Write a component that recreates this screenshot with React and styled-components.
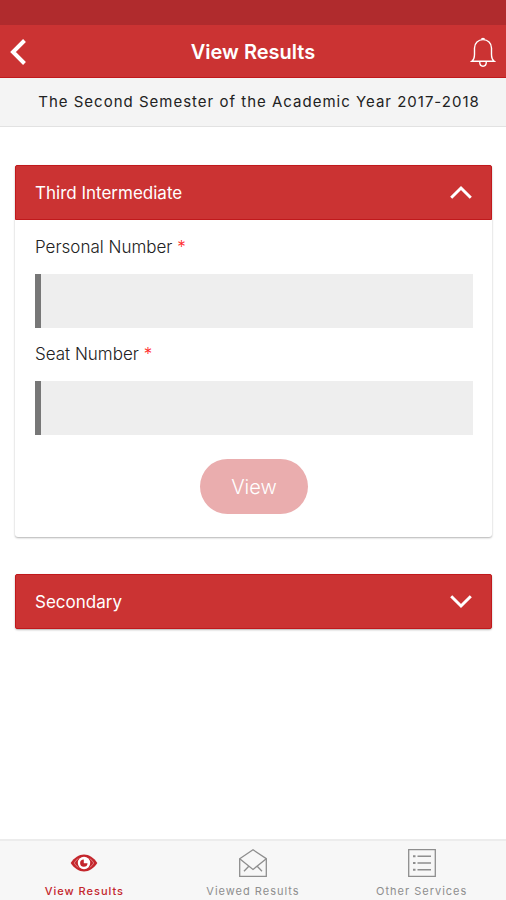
import React, { useState } from 'react';
import styled, { createGlobalStyle, ThemeProvider } from 'styled-components';

const theme = {
  color: {
    primary: '#cb3333',
    primaryDark: '#b02b2d',
    primaryEdge: '#c0191c',
    primaryLight: '#eaadae',
    active: '#c4262c',
    gray100: '#f7f7f7',
    gray200: '#eeeeee',
    gray500: '#8e8e8e',
    gray600: '#777777',
    text: '#222222',
  },
  fontSize: {
    xs: '11px',
    s: '15px',
    m: '17px',
    l: '20px',
  },
};

const GlobalStyle = createGlobalStyle`
  *, *::before, *::after {
    box-sizing: border-box;
  }
  body {
    margin: 0;
    background: #fff;
    font-family: Inter, Roboto, sans-serif;
  }
  button, input {
    font-family: inherit;
  }
`;

const Page = styled.div`
  display: flex;
  flex-direction: column;
  height: 100vh;
`;

const StatusBar = styled.div`
  flex: none;
  height: 25px;
  background: ${({ theme }) => theme.color.primaryDark};
`;

const Header = styled.header`
  display: grid;
  grid-template-columns: 48px 1fr 48px;
  flex: none;
  height: 53px;
  background: ${({ theme }) => theme.color.primary};
  border-bottom: 1px solid ${({ theme }) => theme.color.primaryEdge};
`;

const Title = styled.h1`
  margin: 0;
  color: #fff;
  font-size: ${({ theme }) => theme.fontSize.l};
  font-weight: 600;
  line-height: 54px;
  text-align: center;
`;

const IconButton = styled.button`
  display: flex;
  align-items: center;
  justify-content: ${({ $end }) => ($end ? 'flex-end' : 'flex-start')};
  padding: 0 10px;
  border: 0;
  background: none;
  color: #fff;
  cursor: pointer;
`;

const Semester = styled.p`
  flex: none;
  margin: 0;
  padding-left: 12px;
  background: #f4f4f4;
  border-bottom: 1px solid #e2e2e2;
  color: ${({ theme }) => theme.color.text};
  font-size: ${({ theme }) => theme.fontSize.s};
  letter-spacing: 1px;
  line-height: 48px;
  text-align: center;
  white-space: nowrap;
`;

const Content = styled.main`
  display: flex;
  flex: 1;
  flex-direction: column;
  gap: 37px;
  min-height: 0;
  padding: 38px 14px 38px 15px;
  overflow-y: auto;
`;

const Card = styled.section`
  flex: none;
  border-radius: 3px;
  background: #fff;
  box-shadow: 0 1px 2px rgba(0, 0, 0, 0.3);
`;

const CardHeading = styled.h2`
  margin: 0;
`;

const CardToggle = styled.button`
  display: flex;
  align-items: center;
  justify-content: space-between;
  width: 100%;
  height: 55px;
  padding: 0 19px;
  border: 1px solid ${({ theme }) => theme.color.primaryEdge};
  border-radius: ${({ $open }) => ($open ? '2px 2px 0 0' : '2px')};
  background: ${({ theme }) => theme.color.primary};
  color: #fff;
  font-size: ${({ theme }) => theme.fontSize.m};
  text-align: left;
  cursor: pointer;
`;

const Form = styled.form`
  display: flex;
  flex-direction: column;
  padding: 1px 19px 23px 20px;
`;

const Label = styled.label`
  color: ${({ theme }) => theme.color.text};
  font-size: ${({ theme }) => theme.fontSize.m};
  font-weight: 300;
  line-height: 53px;
`;

const Required = styled.span`
  color: #ff2a2a;
`;

const Input = styled.input`
  width: 100%;
  height: 54px;
  padding: 0 12px;
  border: 0;
  border-left: 6px solid ${({ theme }) => theme.color.gray600};
  border-radius: 0;
  background: ${({ theme }) => theme.color.gray200};
  font-size: ${({ theme }) => theme.fontSize.m};
`;

const SubmitButton = styled.button`
  align-self: center;
  height: 55px;
  margin-top: 24px;
  padding: 0 31px;
  border: 0;
  border-radius: 28px;
  background: ${({ theme }) => theme.color.primaryLight};
  color: #fff;
  font-size: ${({ theme }) => theme.fontSize.l};
  font-weight: 300;
`;

const TabBar = styled.nav`
  display: grid;
  grid-template-columns: repeat(3, 1fr);
  flex: none;
  height: 61px;
  background: ${({ theme }) => theme.color.gray100};
  border-top: 2px solid #ececec;
  overflow: hidden;
`;

const Tab = styled.a`
  display: flex;
  flex-direction: column;
  align-items: center;
  gap: 6px;
  padding-top: 8px;
  color: ${({ theme, $active }) => ($active ? theme.color.active : theme.color.gray500)};
  font-size: ${({ theme }) => theme.fontSize.xs};
  font-weight: ${({ $active }) => ($active ? 500 : 400)};
  letter-spacing: 1px;
  line-height: 16px;
  text-decoration: none;
  white-space: nowrap;
`;

const BackIcon = () => (
  <svg width="17" height="26" viewBox="0 0 17 26" fill="none" stroke="currentColor" strokeWidth="4" aria-hidden="true">
    <path d="M14.5 1.5 3 13l11.5 11.5" />
  </svg>
);

const BellIcon = () => (
  <svg width="26" height="30" viewBox="0 0 26 30" fill="none" stroke="currentColor" strokeWidth="1.4" aria-hidden="true">
    <path d="M11.3 2.6a1.8 1.8 0 0 1 3.4 0" />
    <path d="M1.8 24.3c2.2-1.6 2.7-3.8 2.7-7V11c0-5 3.7-8.4 8.5-8.4s8.5 3.4 8.5 8.4v6.3c0 3.2.5 5.4 2.7 7z" />
    <path d="M9.7 24.7c0 3 1.3 4.500 3.300 4.500s3.300-1.500 3.300-4.500" />
  </svg>
);

const ChevronIcon = ({ up }) => (
  <svg width="22" height="15" viewBox="0 0 22 15" fill="none" stroke="currentColor" strokeWidth="3" aria-hidden="true">
    <path d={up ? 'M1.2 12.7 11 3l9.8 9.7' : 'M1.2 2.3 11 12l9.8-9.7'} />
  </svg>
);

const EyeIcon = () => (
  <svg width="28" height="28" viewBox="0 0 28 28" aria-hidden="true">
    <path fill="currentColor" d="M.7 14C4.3 8.500 9 5.500 14 5.500S23.700 8.500 27.300 14C23.700 19.500 19 22.500 14 22.500S4.300 19.500.7 14z" />
    <circle cx="14" cy="14" r="6.2" fill="#fff" />
    <path fill="currentColor" d="M13.8 10.4v3.800h3.700a3.700 3.700 0 1 1-3.700-3.800z" />
    <path fill="none" stroke="#fff" strokeWidth="1" d="M4.300 14c1-1.900 2.300-3.400 4-4.400M4.300 14c1 1.900 2.300 3.400 4 4.400M23.700 14c-1-1.900-2.300-3.400-4-4.400M23.700 14c-1 1.900-2.300 3.400-4 4.400" opacity="0.4" />
  </svg>
);

const MailIcon = () => (
  <svg width="28" height="28" viewBox="0 0 28 28" fill="none" stroke="currentColor" strokeWidth="1.3" aria-hidden="true">
    <path d="M.7 9.7 14 .8l13.300 8.900v17.600H.7z" />
    <path d="M.7 9.7 14 20.500 27.300 9.700" />
    <path d="M9.8 17.2 5 22.300M18.200 17.200l4.800 5.100" />
  </svg>
);

const ListIcon = () => (
  <svg width="28" height="28" viewBox="0 0 28 28" fill="none" stroke="currentColor" aria-hidden="true">
    <path strokeWidth="1.3" d="M.7.7h26.600v26.600H.7z" />
    <path strokeWidth="2" d="M5 7.300h2.500M5 14h2.500M5 20.700h2.500" />
    <path strokeWidth="1.5" d="M9.500 7.300H23M9.500 14H23M9.500 20.700H23" />
  </svg>
);

const fields = [
  { id: 'personalNumber', label: 'Personal Number' },
  { id: 'seatNumber', label: 'Seat Number' },
];

const tabs = [
  { id: 'results', label: 'View Results', Icon: EyeIcon },
  { id: 'viewed', label: 'Viewed Results', Icon: MailIcon },
  { id: 'services', label: 'Other Services', Icon: ListIcon },
];

const ResultsForm = ({ prefix }) => (
  <Form onSubmit={(e) => e.preventDefault()}>
    {fields.map(({ id, label }) => (
      <React.Fragment key={id}>
        <Label htmlFor={`${prefix}-${id}`}>
          {label} <Required>*</Required>
        </Label>
        <Input id={`${prefix}-${id}`} type="text" required />
      </React.Fragment>
    ))}
    <SubmitButton type="submit">View</SubmitButton>
  </Form>
);

const ResultsCard = ({ id, title, defaultOpen = false }) => {
  const [open, setOpen] = useState(defaultOpen);
  return (
    <Card>
      <CardHeading>
        <CardToggle type="button" $open={open} aria-expanded={open} onClick={() => setOpen(!open)}>
          {title}
          <ChevronIcon up={open} />
        </CardToggle>
      </CardHeading>
      {open && <ResultsForm prefix={id} />}
    </Card>
  );
};

const App = () => (
  <ThemeProvider theme={theme}>
    <GlobalStyle />
    <Page>
      <StatusBar />
      <Header>
        <IconButton type="button" aria-label="Back">
          <BackIcon />
        </IconButton>
        <Title>View Results</Title>
        <IconButton type="button" aria-label="Notifications" $end>
          <BellIcon />
        </IconButton>
      </Header>
      <Semester>The Second Semester of the Academic Year 2017-2018</Semester>
      <Content>
        <ResultsCard id="intermediate" title="Third Intermediate" defaultOpen />
        <ResultsCard id="secondary" title="Secondary" />
      </Content>
      <TabBar>
        {tabs.map(({ id, label, Icon }, index) => (
          <Tab key={id} href={`#${id}`} $active={index === 0}>
            <Icon />
            {label}
          </Tab>
        ))}
      </TabBar>
    </Page>
  </ThemeProvider>
);

export default App;
